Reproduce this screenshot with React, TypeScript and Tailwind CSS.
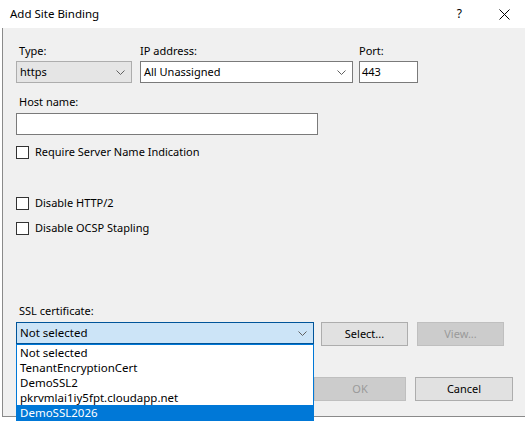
import React from "react";

function Chevron() {
  return (
    <svg width="9" height="5" viewBox="0 0 9 5" className="shrink-0">
      <path d="M0.5 0.5 L4.5 4.5 L8.5 0.5" fill="none" stroke="#606060" strokeWidth="1" />
    </svg>
  );
}

function Label({ children, indent = false }: { children: React.ReactNode; indent?: boolean }) {
  return <div className={`h-[16px] leading-[16px] whitespace-nowrap ${indent ? "pl-[3px]" : ""}`}>{children}</div>;
}

function Checkbox({ label }: { label: string }) {
  return (
    <div className="flex items-center h-[16px] ml-[13px]">
      <span className="w-[13px] h-[13px] bg-white border border-[#333333]" />
      <span className="ml-[6px] leading-[16px]">{label}</span>
    </div>
  );
}

function Button({ children, disabled = false, w }: { children: React.ReactNode; disabled?: boolean; w: string }) {
  return (
    <div
      className={`${w} h-[24px] flex items-center justify-center border ${
        disabled ? "bg-[#cccccc] border-[#bfbfbf] text-[#9a9a9a]" : "bg-[#e1e1e1] border-[#adadad] text-black"
      }`}
    >
      {children}
    </div>
  );
}

const certs = ["Not selected", "TenantEncryptionCert", "DemoSSL2", "pkrvmlai1iy5fpt.cloudapp.net", "DemoSSL2026"];

export default function App() {
  return (
    <div
      className="w-[525px] h-[430px] bg-white overflow-hidden relative text-[11px] text-black"
      style={{ fontFamily: '"Segoe UI", "Noto Sans", sans-serif' }}
    >
      {/* Title bar */}
      <div className="h-[28px] flex items-center pl-[10px]">
        <span className="text-[11.5px]">Add Site Binding</span>
        <span className="ml-auto mr-[37px] text-[12px]">?</span>
        <svg width="11" height="11" viewBox="0 0 11 11" className="mr-[15px]">
          <path d="M0.5 0.5 L10.5 10.5 M10.5 0.5 L0.5 10.5" stroke="#000" strokeWidth="1" />
        </svg>
      </div>

      {/* Dialog body */}
      <div className="ml-[2px] h-[389px] bg-[#f0f0f0] border-l border-b border-[#8a8a8a] pt-[15px]">
        {/* Type / IP / Port */}
        <div className="flex">
          <div className="ml-[13px] w-[116px]">
            <Label indent>Type:</Label>
            <div className="mt-[2px] h-[22px] bg-[#e5e5e5] border border-[#adadad] flex items-center pl-[3px] pr-[6px]">
              <span className="flex-1">https</span>
              <Chevron />
            </div>
          </div>
          <div className="ml-[8px] w-[213px]">
            <Label>IP address:</Label>
            <div className="mt-[2px] h-[22px] bg-white border border-[#7a7a7a] flex items-center pl-[3px] pr-[6px]">
              <span className="flex-1">All Unassigned</span>
              <Chevron />
            </div>
          </div>
          <div className="ml-[6px] w-[59px]">
            <Label>Port:</Label>
            <div className="mt-[2px] h-[22px] bg-white border border-[#7a7a7a] flex items-center pl-[2px]">443</div>
          </div>
        </div>

        {/* Host name */}
        <div className="ml-[13px] mt-[11px]">
          <Label indent>Host name:</Label>
          <div className="mt-[3px] w-[302px] h-[22px] bg-white border border-[#7a7a7a]" />
        </div>

        <div className="mt-[9px]">
          <Checkbox label="Require Server Name Indication" />
        </div>
        <div className="mt-[35px]">
          <Checkbox label="Disable HTTP/2" />
        </div>
        <div className="mt-[9px]">
          <Checkbox label="Disable OCSP Stapling" />
        </div>

        {/* SSL certificate */}
        <div className="ml-[13px] mt-[67px]">
          <Label indent>SSL certificate:</Label>
          <div className="mt-[3px] flex items-start">
            <div className="relative w-[298px]">
              <div className="h-[22px] bg-[#cce4f7] border border-[#005499] flex items-center pl-[3px] pr-[6px]">
                <span className="flex-1 text-[11.5px]">Not selected</span>
                <Chevron />
              </div>
              <div className="absolute top-full left-0 w-full bg-white border border-[#0078d7] z-10 text-[11.5px]">
                {certs.map((c, i) => (
                  <div
                    key={c}
                    className={`h-[15px] leading-[15px] pl-[3px] whitespace-nowrap ${
                      i === certs.length - 1 ? "bg-[#0078d7] text-white" : ""
                    }`}
                  >
                    {c}
                  </div>
                ))}
              </div>
            </div>
            <div className="ml-[7px]">
              <Button w="w-[87px]">Select...</Button>
            </div>
            <div className="ml-[9px]">
              <Button w="w-[87px]" disabled>View...</Button>
            </div>
          </div>
        </div>

        {/* OK / Cancel */}
        <div className="mt-[31px] flex justify-end pr-[12px] gap-[9px]">
          <Button w="w-[92px]" disabled>OK</Button>
          <Button w="w-[98px]">Cancel</Button>
        </div>
      </div>
    </div>
  );
}
